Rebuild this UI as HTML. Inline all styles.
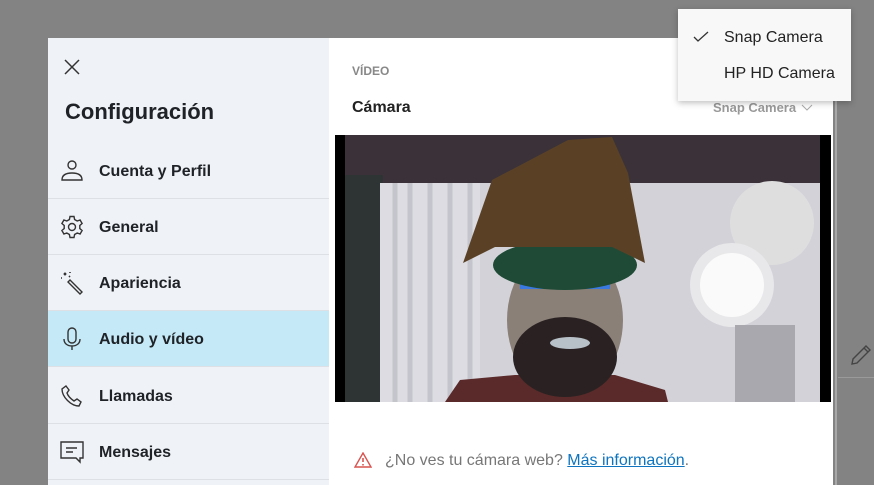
<!DOCTYPE html>
<html><head><meta charset="utf-8"><style>
*{margin:0;padding:0;box-sizing:border-box}
body{width:874px;height:485px;overflow:hidden;background:#838383;font-family:"Liberation Sans",sans-serif;position:relative}
.side{position:absolute;left:48px;top:38px;width:281px;height:447px;background:#eff2f6}
.main{position:absolute;left:329px;top:38px;width:504px;height:447px;background:#fff}
.edge{position:absolute;left:835px;top:100px;width:2px;height:385px;background:#a8a8a8}
.item{position:absolute;left:0;width:281px;height:56px;border-bottom:1px solid #dde1e6}
.item span{position:absolute;left:51px;top:50%;transform:translateY(-45%);font-weight:bold;font-size:16px;color:#1f2328}
.item svg{position:absolute;left:12px;top:50%;transform:translateY(-50%)}
.drop{position:absolute;left:678px;top:9px;width:173px;height:92px;background:#f8f8f8;box-shadow:0 2px 6px rgba(0,0,0,.25)}
.drop div{position:absolute;left:46px;font-size:16px;color:#222}
</style></head><body>
<div class="side">
<svg style="position:absolute;left:16px;top:21px" width="16" height="16" viewBox="0 0 16 16"><path d="M1 1L15 15M15 1L1 15" stroke="#333" stroke-width="1.5"/></svg>
<div style="position:absolute;left:17px;top:61px;font-size:22px;font-weight:bold;color:#1f2328">Configuración</div>
<div class="item" style="top:106px;height:55px"><svg width="24" height="24" viewBox="0 0 24 24" fill="none" stroke="#333" stroke-width="1.4"><circle cx="12" cy="6" r="4"/><path d="M2 21c0-5 4-7 10-7s10 2 10 7z"/></svg><span>Cuenta y Perfil</span></div>
<div class="item" style="top:161px"><svg width="24" height="24" viewBox="0 0 24 24" fill="none" stroke="#333" stroke-width="1.4"><circle cx="12" cy="12" r="3.5"/><path d="M10 1.5h4l.6 3 2.6 1.5 2.9-1 2 3.5-2.3 2v3l2.3 2-2 3.5-2.9-1-2.6 1.5-.6 3h-4l-.6-3-2.6-1.5-2.9 1-2-3.5 2.3-2v-3l-2.3-2 2-3.5 2.9 1L9.4 4.5z"/></svg><span>General</span></div>
<div class="item" style="top:217px"><svg width="24" height="24" viewBox="0 0 24 24" fill="none" stroke="#333" stroke-width="1.4"><path d="M10 9l12 12-2 2L8 11z"/><path d="M4 2l2 2M6 2L4 4M1 7h1M10 1v1M9 5l1 1" stroke-width="1.6"/></svg><span>Apariencia</span></div>
<div class="item" style="top:273px;background:#c5e9f7"><svg width="24" height="24" viewBox="0 0 24 24" fill="none" stroke="#333" stroke-width="1.4"><rect x="8" y="1" width="8" height="15" rx="4"/><path d="M4 12c0 5 4 7 8 7s8-2 8-7M12 19v4"/></svg><span>Audio y vídeo</span></div>
<div class="item" style="top:330px"><svg width="24" height="24" viewBox="0 0 24 24" fill="none" stroke="#333" stroke-width="1.4"><path d="M6 2l3 4-2 3c1 3 4 6 7 8l3-2 4 3-2 4C11 22 2 13 2 5z"/></svg><span>Llamadas</span></div>
<div class="item" style="top:386px"><svg width="24" height="24" viewBox="0 0 24 24" fill="none" stroke="#333" stroke-width="1.4"><path d="M1 2h22v16h-3v4l-4-4H1z"/><path d="M6 8h11M6 12h7"/></svg><span>Mensajes</span></div>
</div>
<div class="main">
<div style="position:absolute;left:23px;top:26px;font-size:12px;font-weight:bold;color:#888">VÍDEO</div>
<div style="position:absolute;left:23px;top:61px;font-size:16px;font-weight:bold;color:#222">Cámara</div>
<div style="position:absolute;left:384px;top:62px;font-size:13px;font-weight:bold;color:#999">Snap Camera</div>
<svg style="position:absolute;left:472px;top:66px" width="12" height="8" viewBox="0 0 12 8"><path d="M1 1l5 5 5-5" fill="none" stroke="#aaa" stroke-width="1"/></svg>
<svg style="position:absolute;left:6px;top:97px" width="496" height="267" viewBox="0 0 496 267">
<rect width="496" height="267" fill="#d2d2d8"/>
<rect x="0" y="0" width="496" height="48" fill="#3a3238"/>
<rect x="10" y="40" width="38" height="227" fill="#2e3434"/>
<rect x="45" y="48" width="100" height="219" fill="#dcdce2"/>
<path d="M60 48v219M75 48v219M95 48v219M115 48v219M135 48v219" stroke="#c4c4cc" stroke-width="5"/>
<circle cx="437" cy="88" r="42" fill="#dedede"/>
<circle cx="397" cy="150" r="42" fill="#e8e8ea"/>
<circle cx="397" cy="150" r="32" fill="#fafafa"/>
<rect x="400" y="190" width="60" height="77" fill="#a8a8ae"/>
<path d="M110 267L125 245 180 240 280 240 330 255 333 267z" fill="#5a2a2a"/>
<ellipse cx="230" cy="185" rx="58" ry="75" fill="#8a8078"/>
<ellipse cx="230" cy="222" rx="52" ry="40" fill="#2a2222"/>
<ellipse cx="235" cy="208" rx="20" ry="6" fill="#b8c0c8"/>
<rect x="185" y="140" width="35" height="14" fill="#3a7ae0"/>
<rect x="245" y="140" width="30" height="14" fill="#3a7ae0"/>
<ellipse cx="230" cy="130" rx="72" ry="25" fill="#1e4a36"/>
<path d="M157 45L233 5 277 2 293 38 310 128 277 112 160 112 128 128z" fill="#5a4126"/>
<rect x="0" y="0" width="10" height="267" fill="#000"/>
<rect x="485" y="0" width="11" height="267" fill="#000"/>
</svg>
<svg style="position:absolute;left:25px;top:414px" width="18" height="16" viewBox="0 0 18 16"><path d="M9 1L17 15H1z" fill="none" stroke="#d9534f" stroke-width="1.4"/><path d="M9 6v4M9 12v1.5" stroke="#d9534f" stroke-width="1.6"/></svg>
<div style="position:absolute;left:56px;top:414px;font-size:16px;color:#777">¿No ves tu cámara web? <span style="color:#0e74bf;text-decoration:underline">Más información</span>.</div>
</div>
<div class="edge"></div>
<div style="position:absolute;left:838px;top:377px;width:36px;height:1px;background:#9a9a9a"></div>
<svg style="position:absolute;left:849px;top:343px" width="24" height="24" viewBox="0 0 24 24" fill="none" stroke="#444" stroke-width="1.4"><path d="M3 21l1-5L17 3l4 4L8 20z M15 5l4 4"/></svg>
<div class="drop">
<svg style="position:absolute;left:15px;top:22px" width="16" height="12" viewBox="0 0 16 12"><path d="M1 6l4 4L15 1" fill="none" stroke="#333" stroke-width="1.3"/></svg>
<div style="top:20px">Snap Camera</div>
<div style="top:56px">HP HD Camera</div>
</div>
</body></html>
